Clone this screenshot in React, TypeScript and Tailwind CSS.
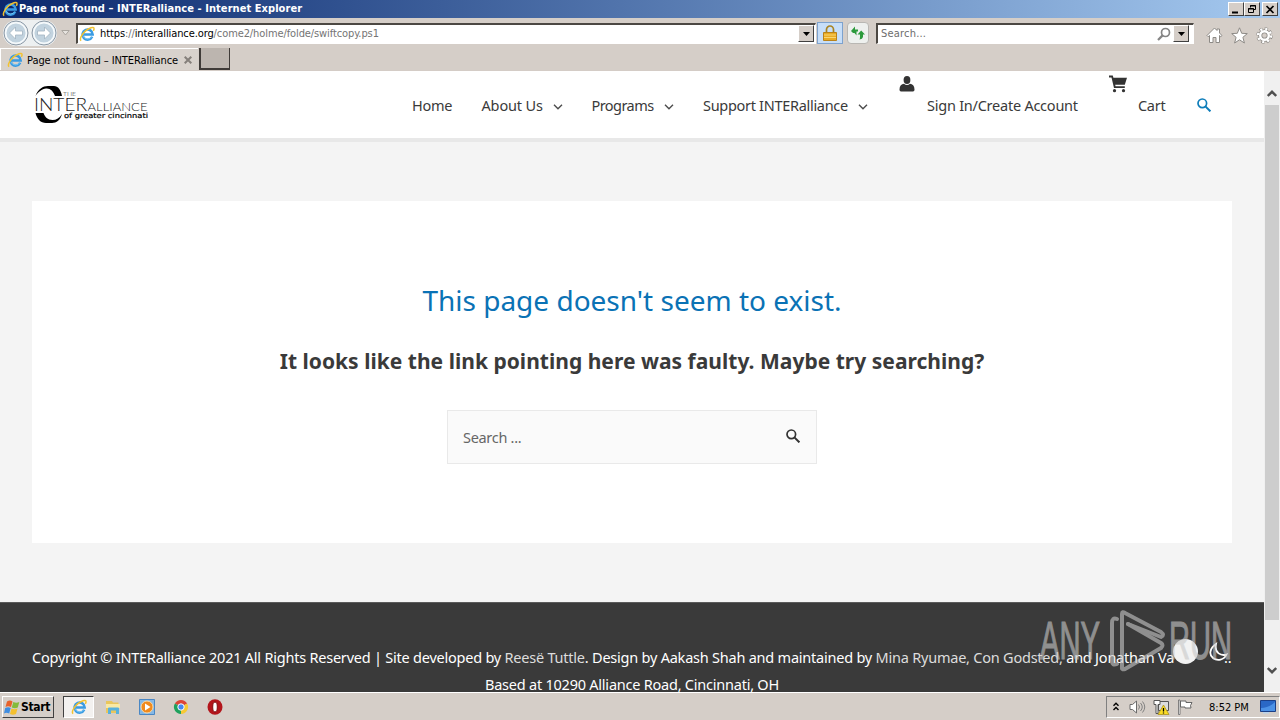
import type { ReactNode } from 'react';

const ui = "font-['DejaVu_Sans_Condensed','DejaVu_Sans',sans-serif]";

function IeIcon({ size = 16 }: { size?: number }) {
  return (
    <svg width={size} height={size} viewBox="0 0 16 16" fill="none" className="shrink-0">
      <path d="M13.2 10.8A5.1 5.1 0 1 1 13.7 8.5H5" stroke="#3a9be2" strokeWidth="2.5" />
      <path d="M13 10.4A5 5 0 0 1 4 10" stroke="#7cc8f5" strokeWidth="0.9" />
      <path d="M2.2 14.6C.2 13.6 2.4 8.4 6.6 4.9 10.4 1.7 14.6.4 15 2.2c.2.8-.2 1.8-.7 2.6" stroke="#f2c230" strokeWidth="1.5" />
    </svg>
  );
}

function Down() {
  return (
    <svg width="7" height="4" viewBox="0 0 7 4">
      <path d="M0 0h7L3.5 4z" fill="#000" />
    </svg>
  );
}

function SearchIcon({ size, color }: { size: number; color: string }) {
  return (
    <svg width={size} height={size} viewBox="0 0 14 14" fill="none" stroke={color} className="shrink-0">
      <circle cx="5.3" cy="5.3" r="4.3" strokeWidth="1.7" />
      <path d="M8.4 8.4l5 5" strokeWidth="2" />
    </svg>
  );
}

function WindowButton({ children }: { children: ReactNode }) {
  return (
    <div className="flex h-[14px] w-4 items-center justify-center border border-t-white border-r-[#404040] border-b-[#404040] border-l-white bg-[#d5cec8]">
      <svg width="12" height="11" viewBox="0 0 12 11" fill="none" stroke="#000">
        {children}
      </svg>
    </div>
  );
}

function TitleBar() {
  return (
    <div className="flex h-[18px] items-center bg-linear-to-r from-[#0c276d] to-[#a6caf0] pr-[2px] pl-[2px]">
      <IeIcon />
      <span className={`${ui} ml-px text-[11px] font-bold tracking-[0.06px] whitespace-nowrap text-white`}>
        Page not found – INTERalliance - Internet Explorer
      </span>
      <div className="ml-auto flex">
        <WindowButton>
          <path d="M2 8.5h6" strokeWidth="2" />
        </WindowButton>
        <WindowButton>
          <path d="M4.5 3.5v-2h5v4h-2M4 2h6" />
          <path d="M2.5 4.5h5v4h-5zM2 5h6" />
        </WindowButton>
        <div className="w-[2px]" />
        <WindowButton>
          <path d="M2.5 2l7 7M9.5 2l-7 7" strokeWidth="1.7" />
        </WindowButton>
      </div>
    </div>
  );
}

function RoundButton({ flip }: { flip?: boolean }) {
  return (
    <svg width="26" height="26" viewBox="0 0 26 26" className={flip ? '-scale-x-100' : ''}>
      <circle cx="13" cy="13" r="12" fill="#dfe6ec" stroke="#8b99a6" />
      <circle cx="13" cy="13" r="10.3" fill="#c2d3df" stroke="#f6fafc" strokeWidth="1.5" />
      <path d="M12.5 7l-6 6 6 6v-4h7v-4h-7z" fill="#fff" stroke="#a2b4c2" strokeWidth="0.8" />
    </svg>
  );
}

function DropButton() {
  return (
    <div className="flex h-[17px] w-4 items-center justify-center border border-t-white border-r-[#404040] border-b-[#404040] border-l-white bg-[#d5cec8]">
      <Down />
    </div>
  );
}

function AddressBar() {
  return (
    <div className="flex h-[30px] items-center bg-[#d5cec8] pl-[3px]">
      <div className="flex h-[26px] w-[54px] rounded-full bg-[#edf0f1]">
        <RoundButton />
        <div className="ml-[2px]">
          <RoundButton flip />
        </div>
      </div>
      <svg width="9" height="6" viewBox="0 0 9 6" className="ml-[4px]">
        <path d="M.8.5h7.4L4.5 5z" fill="#e6e3df" stroke="#aaa6a0" />
      </svg>
      <div className="ml-[6px] flex h-[21px] w-[740px] items-center border-t-2 border-r border-b border-l-2 border-t-[#4c4843] border-r-white border-b-white border-l-[#4c4843] bg-white pr-px pl-px">
        <IeIcon />
        <span className={`${ui} mt-[2px] ml-[5px] text-[11px] tracking-[-0.1px] whitespace-nowrap text-[#747474]`}>
          <span className="text-black">https</span>://<span className="text-black">interalliance.org</span>
          /come2/holme/folde/swiftcopy.ps1
        </span>
        <div className="ml-auto">
          <DropButton />
        </div>
      </div>
      <div className="ml-px flex h-[22px] w-[26px] items-center justify-center border border-[#7da2ce] bg-[#c7def8]">
        <svg width="14" height="16" viewBox="0 0 14 16">
          <path d="M3.5 8V4.5a3.5 3.5 0 0 1 7 0V8" fill="none" stroke="#a98322" strokeWidth="1.7" />
          <path d="M.5 7.5h13v8H.5z" fill="#e9ab25" stroke="#b9821a" />
          <path d="M1 10h12M1 12.5h12" stroke="#f9d673" />
        </svg>
      </div>
      <div className="ml-[4px] flex h-[22px] w-[22px] items-center justify-center rounded-sm border border-[#b9b7b3] bg-[#eef0ee]">
        <svg width="14" height="14" viewBox="0 0 14 14" fill="#2c9a3c">
          <path d="M0 5l4-4.5V3.5h3V5.500H5.500V9.500L3.500 7H2z" />
          <path d="M14 8.500H12V11q-.5 2-3.500 2.500.5-1 .5-2.500V8.500H6.500L10.200 4.500z" />
        </svg>
      </div>
      <div className="ml-[7px] flex h-[21px] w-[318px] items-center border-t-2 border-r border-b border-l-2 border-t-[#4c4843] border-r-white border-b-white border-l-[#4c4843] bg-white pr-[4px] pl-[3px]">
        <span className={`${ui} mt-[2px] text-[11px] tracking-[0.2px] text-[#6d6d6d]`}>Search...</span>
        <svg width="14" height="14" viewBox="0 0 14 14" fill="none" stroke="#858585" className="ml-auto">
          <circle cx="8.5" cy="5.5" r="4" strokeWidth="1.7" />
          <path d="M5.6 8.4L1 13" strokeWidth="2.2" />
        </svg>
        <div className="ml-[2px]">
          <DropButton />
        </div>
      </div>
      <div className="mt-[4px] ml-[12px] flex items-center gap-[8px]">
        <svg width="17" height="17" viewBox="0 0 17 17" fill="#fff" stroke="#8d8a86">
          <path d="M1 8.5L8.5 1 11 3.5V2h2.5v4L16 8.5l-1.2 1.2-1.3-1.2v7H10v-5H7v5H3.5v-7L2.2 9.7z" />
        </svg>
        <svg width="17" height="17" viewBox="0 0 17 17" fill="#fff" stroke="#8d8a86">
          <path d="M8.5.8l2.2 5.5 5.6.3-4.4 3.7 1.5 5.7-4.9-3.2L3.6 16l1.5-5.7L.7 6.6l5.600-.3z" />
        </svg>
        <svg width="17" height="17" viewBox="0 0 17 17" fill="none">
          <circle cx="8.5" cy="8.5" r="6.7" stroke="#8d8a86" strokeWidth="3" strokeDasharray="3.1 2.16" />
          <circle cx="8.5" cy="8.5" r="4.3" stroke="#8d8a86" strokeWidth="4" />
          <circle cx="8.5" cy="8.5" r="6.5" stroke="#fff" strokeWidth="2.4" strokeDasharray="2.1 3.005" />
          <circle cx="8.5" cy="8.5" r="4.3" stroke="#fff" strokeWidth="2.4" />
        </svg>
      </div>
    </div>
  );
}

function TabRow() {
  return (
    <div className="flex h-[23px] border-b border-[#d4ccc6] bg-[#d5cec8]">
      <div className="flex w-[198px] items-center border-t border-l border-white bg-[#d8d2cc] pl-[6px]">
        <IeIcon />
        <span className={`${ui} mt-[3px] ml-[4px] text-[11px] tracking-[-0.08px] whitespace-nowrap text-black`}>
          Page not found – INTERalliance
        </span>
        <svg width="8" height="8" viewBox="0 0 8 8" className="mr-[6px] ml-auto">
          <path d="M.7.7l6.6 6.6M7.3.7L.7 7.3" stroke="#85807b" strokeWidth="2" />
        </svg>
      </div>
      <div className="ml-px h-[22px] w-[31px] border-r border-b-2 border-l-2 border-[#3f3b38] bg-[#bcb5af]" />
    </div>
  );
}

function Logo() {
  return (
    <svg width="116" height="40" viewBox="0 0 116 40">
      <path d="M1.5 11C4 4 9 1 14 1h6c4 0 7 4 8 10h-7C19.5 6 16 3 12 3.500 8 4 4 7 1.500 11z" fill="#000" />
      <path d="M1.5 28h8c1.5 4 4 7 9 7 4 0 7-2 9.5-6-1.5 6-5.5 9-10 9h-6C6.5 38 3 34 1.5 28z" fill="#000" />
      <g fill="#222" fontFamily="Lato, Liberation Sans, sans-serif" fontWeight="300">
        <text x="29" y="10.5" fontSize="6.5" textLength="13" lengthAdjust="spacingAndGlyphs">THE</text>
        <text x="0" y="26" fontSize="18" textLength="53" lengthAdjust="spacingAndGlyphs">INTER</text>
        <text x="53.5" y="26" fontSize="12" textLength="60" lengthAdjust="spacingAndGlyphs">ALLIANCE</text>
      </g>
      <text x="30" y="33" fontSize="7" fill="#000" stroke="#000" strokeWidth="0.2" fontFamily="DejaVu Sans, sans-serif" textLength="84" lengthAdjust="spacingAndGlyphs">
        of greater cincinnati
      </text>
    </svg>
  );
}

function Chevron() {
  return (
    <svg width="10" height="6" viewBox="0 0 10 6" fill="none" className="mt-[3px]">
      <path d="M1 .8l4 4 4-4" stroke="#4c4c4c" strokeWidth="1.4" />
    </svg>
  );
}

function SiteHeader() {
  return (
    <header className="flex h-[71px] shrink-0 items-center border-b-4 border-[#e8e8e8] bg-white pl-[34px] text-[14.5px] whitespace-nowrap text-[#3a3a3a]">
      <Logo />
      <nav className="ml-auto flex items-center pr-[53px]">
        <a className="mt-[2px] w-[69.5px] tracking-[-0.3px]">Home</a>
        <a className="mt-[2px] flex w-[110px] items-center gap-[10px] tracking-[-0.15px]">
          About Us <Chevron />
        </a>
        <a className="mt-[2px] flex w-[111.5px] items-center gap-[10px] tracking-[-0.55px]">
          Programs <Chevron />
        </a>
        <a className="mt-[2px] flex w-[196px] items-center gap-[10px] tracking-[-0.3px]">
          Support INTERalliance <Chevron />
        </a>
        <a className="mt-[2px] flex w-[210px] items-center tracking-[-0.24px]">
          <svg width="16" height="16" viewBox="0 0 16 16" fill="#333" className="mr-[12px] mb-[43px]">
            <ellipse cx="8" cy="4" rx="3.4" ry="4" />
            <path d="M.5 13.5C.5 10 2.5 8 5 7.800c1.800 1.600 4.200 1.600 6 0 2.500.2 4.500 2.200 4.500 5.700 0 1.200-.6 2-1.500 2H2c-.9 0-1.500-.8-1.500-2z" />
          </svg>
          Sign In/Create Account
        </a>
        <a className="mt-[2px] flex w-[88px] items-center tracking-[-0.3px]">
          <svg width="18" height="18" viewBox="0 0 18 18" fill="#333" className="mr-[11px] mb-[43px]">
            <path d="M0 .5h3.8l.6 2.3H18l-2.2 7H6.2l.3 1.4h9.3v1.9H5L2.500 2.400H0z" />
            <circle cx="5.5" cy="15.7" r="1.6" />
            <circle cx="14.5" cy="15.7" r="1.6" />
          </svg>
          Cart
        </a>
        <SearchIcon size={14} color="#0e7dba" />
      </nav>
    </header>
  );
}

function NotFound() {
  return (
    <main className="mx-8 mt-[59px] flex h-[342px] shrink-0 flex-col items-center bg-white whitespace-nowrap">
      <h1 className="mt-[78px] text-[28px] leading-[42px] text-[#0a72b5]">This page doesn't seem to exist.</h1>
      <p className="mt-[23px] text-[21px] leading-[34px] font-bold tracking-[0.02px] text-[#3a3a3a]">
        It looks like the link pointing here was faulty. Maybe try searching?
      </p>
      <div className="mt-[32px] flex h-[54px] w-[370px] items-center border border-[#e9e9e9] bg-[#fafafa] pr-[16px] pl-[15px]">
        <span className="mt-[2px] text-[14.5px] tracking-[-0.3px] text-[#666]">Search ...</span>
        <div className="mb-[3px] ml-auto">
          <SearchIcon size={14} color="#333" />
        </div>
      </div>
    </main>
  );
}

function ThemeToggle() {
  return (
    <div className="absolute top-[36px] right-[35px] flex h-[25px] w-[56px] items-center justify-between">
      <div className="size-[25px] rounded-full bg-[#f2f2f2]" />
      <svg width="20" height="20" viewBox="0 0 20 20" fill="none">
        <path d="M7 2C1 6-.5 12.5 4 16c4.500 3.500 11 2 13.500-3.500C12.500 14 5 11.500 7 2z" stroke="#fff" strokeWidth="1.8" />
      </svg>
    </div>
  );
}

function Watermark() {
  return (
    <svg width="196" height="64" viewBox="0 0 196 64" className="absolute top-[7px] right-[29px] opacity-60">
      <g fill="#c8c8c8" stroke="#c8c8c8" strokeWidth="1.2" fontFamily="Liberation Sans, sans-serif" fontSize="54">
        <text x="1" y="49" textLength="60" lengthAdjust="spacingAndGlyphs">ANY</text>
        <text x="130" y="49" textLength="63" lengthAdjust="spacingAndGlyphs">RUN</text>
      </g>
      <g fill="none" stroke="#c8c8c8" strokeWidth="4" strokeLinecap="round" strokeLinejoin="round">
        <path d="M78 9q-5-2-5 4v38q0 5 5 3" />
        <path d="M83 58V4q0-3 3-1l36 19q4 3 0 5L89 14" />
        <path d="M89 14l33 19q3 2 0 5L86 59q-3 1-3-1" />
      </g>
    </svg>
  );
}

function SiteFooter() {
  return (
    <footer className="relative mt-[59px] h-[90px] shrink-0 border-t border-[#5a5a5a] bg-[#3a3a3a] pt-[41px] text-center text-[14.5px] leading-[27px] whitespace-nowrap text-white">
      <p className="ml-[32px] text-left tracking-[-0.225px]">
        Copyright © INTERalliance 2021 All Rights Reserved | Site developed by <a className="text-[#ddd]">Reesë Tuttle</a>. Design by
        Aakash Shah and maintained by <a className="text-[#ddd]">Mina Ryumae, Con Godsted,</a> and Jonathan Va
        <span className="ml-[50px]">..</span>
      </p>
      <p className="tracking-[-0.23px]">Based at 10290 Alliance Road, Cincinnati, OH</p>
      <ThemeToggle />
      <Watermark />
    </footer>
  );
}

function Scrollbar() {
  return (
    <div className="flex w-4 flex-col items-center bg-[#f0f0f0]">
      <svg width="10" height="7" viewBox="0 0 10 7" className="mt-[19px]">
        <path d="M.8 6L5 1.8 9.2 6" fill="none" stroke="#505050" strokeWidth="2.4" />
      </svg>
      <div className="mt-[8px] h-[515px] w-[14px] bg-[#cdcdcd]" />
      <svg width="10" height="7" viewBox="0 0 10 7" className="mt-[47px]">
        <path d="M.8 1L5 5.2 9.2 1" fill="none" stroke="#505050" strokeWidth="2.4" />
      </svg>
    </div>
  );
}

function Taskbar() {
  return (
    <div className="flex h-7 items-center border-t border-white bg-[#d5cec8] pl-[2px]">
      <div className="mt-px flex h-[22px] w-[52px] items-center border border-t-white border-r-[#404040] border-b-[#404040] border-l-white pl-px">
        <svg width="16" height="15" viewBox="0 0 16 15" className="shrink-0">
          <path d="M3 1.5q3-2 5.5 0L7 7Q4 5.5 1.5 7z" fill="#e8622a" />
          <path d="M9.3 2q3 1.5 6 0L13.8 7.5q-3 1.5-6 0z" fill="#84bb3c" />
          <path d="M1.2 8q3-1.5 5.5 0L5.2 13.5q-3-1.5-5.2 0z" fill="#3f8de0" />
          <path d="M7.5 8.5q3 1.5 6 0L12 14q-3 1.5-6 0z" fill="#f4c02e" />
        </svg>
        <span className={`${ui} ml-px text-[12px] font-bold tracking-[-0.3px] text-black`}>Start</span>
      </div>
      <div className="mt-px ml-[9px] flex h-[22px] w-[31px] items-center justify-center border border-t-[#404040] border-r-white border-b-white border-l-[#404040] bg-[#f3f1ef]">
        <IeIcon />
      </div>
      <div className="mt-px ml-[11px] flex items-center gap-[18px]">
        <svg width="16" height="16" viewBox="0 0 16 16">
          <path d="M1 2h6l1 1.5h5.5V14H1z" fill="#e9c65c" />
          <path d="M1 5h14v4H1z" fill="#f9e9a4" />
          <path d="M3 15V9.5q0-1 1-1h9q1 0 1 1V15h-3v-3.500H6V15z" fill="#58b1dc" />
        </svg>
        <svg width="16" height="16" viewBox="0 0 16 16">
          <path d="M.5.5h15v15H.5z" fill="#85b8e6" stroke="#4a87c4" />
          <circle cx="8" cy="8" r="6" fill="#f18a1d" stroke="#fbd9a5" />
          <path d="M6 4.5L11.5 8 6 11.5z" fill="#fff" />
        </svg>
        <svg width="16" height="16" viewBox="0 0 16 16">
          <path d="M8 8L1.9 4.5A7 7 0 0 1 14.1 4.5z" fill="#dd4436" />
          <path d="M8 8L1.9 4.5A7 7 0 0 0 8 15z" fill="#1fa15d" />
          <path d="M8 8l6.1-3.5A7 7 0 0 1 8 15z" fill="#f7c934" />
          <circle cx="8" cy="8" r="3.2" fill="#4688f1" stroke="#fff" />
        </svg>
        <svg width="16" height="16" viewBox="0 0 16 16">
          <ellipse cx="8" cy="8" rx="7.5" ry="7.8" fill="#b3151b" />
          <ellipse cx="8" cy="8" rx="2.3" ry="5" fill="#fff" stroke="#7d0c10" />
        </svg>
      </div>
      <div className="mt-px ml-auto flex h-[22px] w-[174px] items-center border border-t-[#808080] border-r-white border-b-white border-l-[#808080] pl-[6px]">
        <svg width="6" height="9" viewBox="0 0 6 9" fill="none" stroke="#000" strokeWidth="1.4" className="mb-[2px]">
          <path d="M.5 3.8L3 1.3l2.5 2.5M.5 8L3 5.5 5.5 8" />
        </svg>
        <svg width="17" height="14" viewBox="0 0 17 14" className="ml-[10px]" fill="none">
          <path d="M1 4.5h2.5L7.5 1v12L3.5 9.500H1z" fill="#fff" stroke="#6c6c6c" />
          <path d="M9.5 4.5q2 2.5 0 5M11.5 3q3.5 4 0 8M13.5 1.500q4.500 5.500 0 11" stroke="#818181" />
        </svg>
        <svg width="17" height="16" viewBox="0 0 17 16" className="ml-[7px]">
          <path d="M5.5 2.5h10v9h-10z" fill="#dcdcdc" stroke="#555" />
          <path d="M1 1.5h6v4H5v9H3v-9H1z" fill="#fff" stroke="#555" />
          <path d="M10.5 6l5.5 9.5H5z" fill="#fbdc24" stroke="#a38a12" strokeWidth="0.7" />
          <path d="M10.5 9v3.5M10.5 13.5v1" stroke="#000" strokeWidth="1.3" />
        </svg>
        <svg width="17" height="16" viewBox="0 0 17 16" className="ml-[7px]">
          <path d="M1.5 1v14.5h1.5V1z" fill="#fff" stroke="#666" strokeWidth="0.8" />
          <path d="M3.5 2h5.5v1.5h6l-1.5 3 .5 2.5H8V8H3.500z" fill="#fff" stroke="#666" />
        </svg>
        <span className={`${ui} mt-[2px] ml-[15px] text-[11px] whitespace-nowrap text-black`}>8:52 PM</span>
        <svg width="16" height="14" viewBox="0 0 16 14" className="mr-[3px] ml-auto">
          <path d="M.5.5h15v11H.5z" fill="#2a68c6" stroke="#1b3f86" />
          <path d="M1 8Q9 8 15 2v9H1z" fill="#4c92e6" />
          <path d="M3 12h6v1.5H3z" fill="#b9d3ec" />
        </svg>
      </div>
    </div>
  );
}

export default function App() {
  return (
    <div className="flex h-[720px] w-[1280px] flex-col overflow-hidden">
      <TitleBar />
      <AddressBar />
      <TabRow />
      <div className="flex h-[621px]">
        <div className="flex w-[1264px] flex-col overflow-hidden bg-[#f4f4f4] font-['Noto_Sans',sans-serif]">
          <SiteHeader />
          <NotFound />
          <SiteFooter />
        </div>
        <Scrollbar />
      </div>
      <Taskbar />
    </div>
  );
}
